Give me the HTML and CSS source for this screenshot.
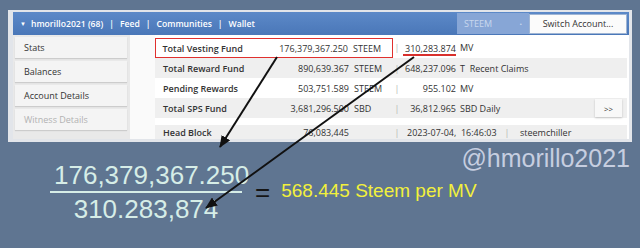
FILE: index.html
```html
<!DOCTYPE html>
<html lang="en">
<head>
    <meta charset="UTF-8">
    <title>Steem per MV</title>
    <link rel="stylesheet" href="styles.css">
</head>
<body>
    <div class="shot">
        <div class="topbar">
            <div class="nav">
                <span class="caret">&#9660;</span>
                <span>hmorillo2021 (68)</span><span class="pipe">|</span>
                <span>Feed</span><span class="pipe">|</span>
                <span>Communities</span><span class="pipe">|</span>
                <span>Wallet</span>
            </div>
            <div class="chain">STEEM <span class="dot">&middot;</span></div>
            <div class="switch">Switch Account...</div>
        </div>
        <div class="content">
            <div class="sidebar">
                <div class="side-item">Stats</div>
                <div class="side-item">Balances</div>
                <div class="side-item">Account Details</div>
                <div class="side-item muted">Witness Details</div>
            </div>
            <div class="stats">
                <div class="row first">
                    <div class="boxed">
                        <span class="label">Total Vesting Fund</span>
                        <span class="val">176,379,367.250</span>
                        <span class="unit">STEEM</span>
                    </div>
                    <span class="sep">|</span>
                    <span class="val2 marked">310,283.874</span>
                    <span class="unit2">MV</span>
                </div>
                <div class="row alt">
                    <span class="label">Total Reward Fund</span>
                    <span class="val">890,639.367</span>
                    <span class="unit">STEEM</span>
                    <span class="sep">|</span>
                    <span class="val2">648,237.096</span>
                    <span class="unit2">T&nbsp; Recent Claims</span>
                </div>
                <div class="row">
                    <span class="label">Pending Rewards</span>
                    <span class="val">503,751.589</span>
                    <span class="unit">STEEM</span>
                    <span class="sep">|</span>
                    <span class="val2">955.102</span>
                    <span class="unit2">MV</span>
                </div>
                <div class="row alt">
                    <span class="label">Total SPS Fund</span>
                    <span class="val">3,681,296.500</span>
                    <span class="unit">SBD</span>
                    <span class="sep">|</span>
                    <span class="val2">36,812.965</span>
                    <span class="unit2">SBD Daily</span>
                    <span class="more">&gt;&gt;</span>
                </div>
                <div class="row alt head">
                    <span class="label">Head Block</span>
                    <span class="val">76,083,445</span>
                    <span class="unit"></span>
                    <span class="sep">|</span>
                    <span class="date">2023-07-04,&nbsp; 16:46:03</span>
                    <span class="sep wide">|</span>
                    <span>steemchiller</span>
                </div>
            </div>
        </div>
    </div>

    <div class="handle">@hmorillo2021</div>

    <div class="formula">
        <div class="fraction">
            <div class="num">176,379,367.250</div>
            <div class="den">310.283,874</div>
        </div>
        <div class="equals">=</div>
        <div class="result">568.445 Steem per MV</div>
    </div>

    <!-- flechas encima de todo -->
    <svg class="arrows" width="640" height="248" viewBox="0 0 640 248">
        <defs>
            <marker id="head" markerWidth="6" markerHeight="5" refX="5.5" refY="2.5" orient="auto" markerUnits="strokeWidth">
                <path d="M0,0 L6,2.5 L0,5 Z" fill="#111"/>
            </marker>
        </defs>
        <line x1="277" y1="57" x2="220" y2="147" stroke="#111" stroke-width="2" marker-end="url(#head)"/>
        <line x1="414" y1="57" x2="206" y2="208" stroke="#111" stroke-width="2" marker-end="url(#head)"/>
    </svg>
</body>
</html>
```

FILE: styles.css
```css
body {
    margin: 0;
    width: 640px;
    height: 248px;
    overflow: hidden;
    position: relative;
    background-color: #5f7591;
    font-family: "Open Sans", "Liberation Sans", sans-serif;
}

.shot {
    margin: 10px 0 0 8px;
    width: 624px;
    height: 132px;
    box-sizing: border-box;
    padding: 2px 3px 3px 5px;
    background-color: #e2e5ea;
    display: flex;
    flex-direction: column;
}

/* barra azul de arriba */
.topbar {
    height: 23px;
    flex: none;
    display: flex;
    align-items: center;
    background: linear-gradient(#5c89c8, #4a77b8);
    color: white;
    font-size: 8.6px;
    font-weight: 600;
}

.nav {
    flex: 1;
    padding-left: 7px;
    display: flex;
    align-items: center;
}

.caret {
    font-size: 6px;
    margin-right: 5px;
}

.pipe {
    margin: 0 6px;
}

.chain {
    width: 72px;
    height: 21px;
    box-sizing: border-box;
    padding: 0 7px;
    display: flex;
    align-items: center;
    justify-content: space-between;
    background-color: #87a6d6;
    color: #c9d8ee;
    font-weight: 400;
    font-size: 9px;
}

.chain .dot {
    font-weight: 700;
}

.switch {
    width: 98px;
    height: 20px;
    margin-right: 2px;
    box-sizing: border-box;
    border: 1px solid #9fb5d4;
    background-color: #fbfbfb;
    color: #333;
    font-weight: 400;
    font-size: 9px;
    display: flex;
    align-items: center;
    justify-content: center;
}

/* cuerpo blanco */
.content {
    flex: 1;
    display: flex;
    background-color: #fafafa;
    overflow: hidden;
}

.sidebar {
    width: 117px;
    box-sizing: border-box;
    padding: 2px 3px 0 2px;
    background-color: #e9e9e9;
    display: flex;
    flex-direction: column;
    gap: 3px;
}

.side-item {
    height: 21px;
    padding-left: 9px;
    display: flex;
    align-items: center;
    background-color: #f4f4f4;
    box-shadow: 0 1px 1px rgba(0, 0, 0, 0.12);
    color: #333;
    font-size: 9px;
}

.side-item.muted {
    color: #b2b2b2;
}

.stats {
    flex: 1;
    margin-left: 25px;
    padding: 2px 2px 0 0;
    font-size: 9px;
    color: #333;
    background-color: #fff;
}

.row {
    height: 20px;
    display: flex;
    align-items: center;
}

.row.first {
    height: 21px;
}

.row.alt {
    background-color: #efefef;
}

.row.head {
    height: 14px;
    margin-top: 7px;
}

.boxed {
    height: 20px;
    display: flex;
    align-items: center;
    box-sizing: border-box;
    border: 1.5px solid #e0302e;
    margin-top: 1px;
}

.boxed .label {
    width: 110px;
    padding-left: 6.5px;
}

.label {
    width: 112px;
    padding-left: 8px;
    box-sizing: border-box;
    font-weight: 600;
}

.val {
    width: 82px;
    text-align: right;
}

.unit {
    width: 44px;
    padding-left: 5px;
    box-sizing: border-box;
}

.sep {
    width: 8px;
    color: #b5b5b5;
    text-align: center;
}

.val2 {
    width: 55px;
    text-align: right;
}

.val2.marked {
    width: 53px;
    margin-left: 2px;
    border-bottom: 2px solid #d8302c;
    line-height: 11px;
    margin-top: 4px;
}

.unit2 {
    padding-left: 4px;
    flex: 1;
}

.date {
    padding-left: 6px;
    width: 92px;
}

.sep.wide {
    width: 16px;
    margin-right: 5px;
}

.more {
    width: 27px;
    height: 18px;
    margin-right: 5px;
    display: flex;
    align-items: center;
    justify-content: center;
    background-color: #f8f8f8;
    box-shadow: 0 1px 2px rgba(0, 0, 0, 0.2);
    font-size: 8px;
}

/* parte de abajo */
.handle {
    margin-top: 3px;
    padding-right: 10px;
    text-align: right;
    line-height: 26px;
    font-family: "Liberation Sans", Arial, sans-serif;
    font-size: 25px;
    color: #c6cee0;
}

.formula {
    margin-top: -9px;
    padding-left: 50px;
    display: flex;
    align-items: center;
    font-family: "Liberation Sans", Arial, sans-serif;
}

.fraction {
    width: 192px;
    text-align: center;
    color: #d6ede7;
    font-size: 26px;
    line-height: 26px;
}

.num {
    padding-left: 4px;
    padding-bottom: 3px;
    border-bottom: 2px solid #d6ede7;
}

.den {
    padding-top: 3px;
}

.equals {
    margin-left: 13px;
    font-size: 26px;
    line-height: 26px;
    color: #151515;
}

.result {
    margin-left: 11px;
    margin-bottom: 3px;
    font-size: 19px;
    line-height: 19px;
    color: #f2f03c;
}

.arrows {
    position: absolute;
    top: 0;
    left: 0;
    pointer-events: none;
}
```
